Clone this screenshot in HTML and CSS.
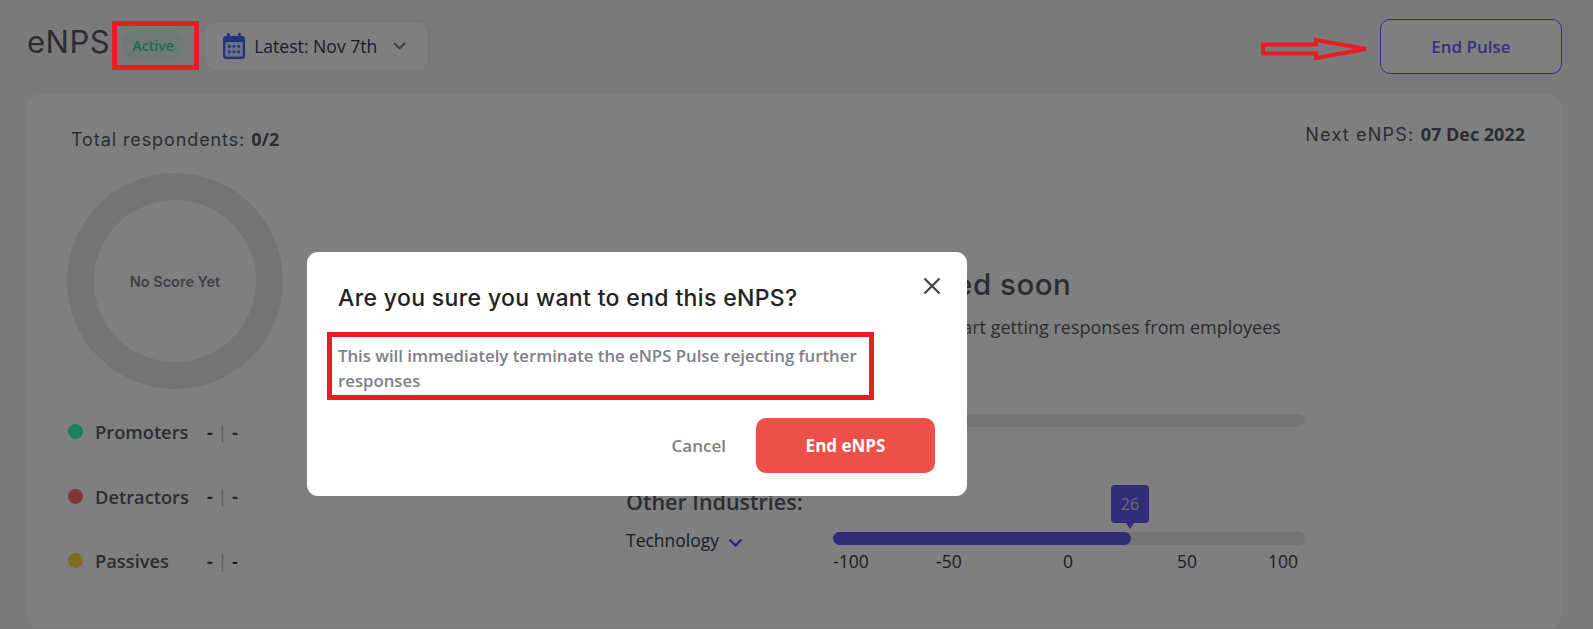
FILE: index.html
```html
<!DOCTYPE html>
<html lang="en">
<head>
    <meta charset="UTF-8">
    <meta name="viewport" content="width=device-width, initial-scale=1.0">
    <title>eNPS</title>
    <link rel="stylesheet" href="styles.css">
</head>
<body>
    <div class="page">
        <header class="top-bar">
            <h1 class="page-title">eNPS</h1>
            <span class="badge">Active</span>
            <div class="date-picker">
                <svg class="calendar" width="24" height="28" viewBox="0 0 24 28">
                    <rect x="1" y="4" width="22" height="23" rx="3" fill="#3e66ff"/>
                    <rect x="5" y="1" width="3" height="6" rx="1.2" fill="#3e66ff"/>
                    <rect x="16" y="1" width="3" height="6" rx="1.2" fill="#3e66ff"/>
                    <rect x="3.2" y="10" width="17.6" height="14.8" rx="1" fill="#d6e0ff"/>
                    <g fill="#3e66ff">
                        <rect x="6" y="13" width="2.6" height="2.6"/>
                        <rect x="10.7" y="13" width="2.6" height="2.6"/>
                        <rect x="15.4" y="13" width="2.6" height="2.6"/>
                        <rect x="6" y="18.5" width="2.6" height="2.6"/>
                        <rect x="10.7" y="18.5" width="2.6" height="2.6"/>
                        <rect x="15.4" y="18.5" width="2.6" height="2.6"/>
                    </g>
                </svg>
                <span class="date-text">Latest: Nov 7th</span>
                <svg class="chevron" width="13" height="8" viewBox="0 0 13 8">
                    <path d="M1 1l5.5 5.5L12 1" fill="none" stroke="#777" stroke-width="1.8"/>
                </svg>
            </div>
            <button class="end-pulse">End Pulse</button>
        </header>

        <main class="card">
            <div class="card-top">
                <p class="total">Total respondents: <b>0/2</b></p>
                <p class="next">Next eNPS: <b>07 Dec 2022</b></p>
            </div>
            <div class="card-body">
                <section class="score">
                    <div class="donut"><span>No Score Yet</span></div>
                    <ul class="legend">
                        <li><i class="dot green"></i><span class="legend-name">Promoters</span><span class="legend-val">- <em>|</em> -</span></li>
                        <li><i class="dot red"></i><span class="legend-name">Detractors</span><span class="legend-val">- <em>|</em> -</span></li>
                        <li><i class="dot yellow"></i><span class="legend-name">Passives</span><span class="legend-val">- <em>|</em> -</span></li>
                    </ul>
                </section>
                <section class="results">
                    <h2>Results will be generated soon</h2>
                    <p class="results-sub">Your scores will appear here once you start getting responses from employees</p>
                    <div class="bar-row first-row">
                        <span class="bar-label">All</span>
                        <div class="track"></div>
                    </div>
                    <h3>Other Industries:</h3>
                    <div class="bar-row tech-row">
                        <span class="bar-label">Technology
                            <svg width="15" height="9" viewBox="0 0 15 9"><path d="M1.5 1.5l6 6 6-6" fill="none" stroke="#5a50e0" stroke-width="2.4"/></svg>
                        </span>
                        <div class="scale">
                            <div class="track">
                                <div class="fill"></div>
                                <div class="tip">26</div>
                            </div>
                            <div class="ticks">
                                <span>-100</span><span>-50</span><span>0</span><span>50</span><span>100</span>
                            </div>
                        </div>
                    </div>
                </section>
            </div>
        </main>
    </div>

    <div class="overlay"></div>

    <div class="modal">
        <button class="close">
            <svg width="18" height="18" viewBox="0 0 18 18"><path d="M1.5 1.5l15 15M16.5 1.5l-15 15" stroke="#444" stroke-width="2.2"/></svg>
        </button>
        <h2 class="modal-title">Are you sure you want to end this eNPS?</h2>
        <p class="modal-text">This will immediately terminate the eNPS Pulse rejecting further responses</p>
        <div class="modal-actions">
            <button class="cancel">Cancel</button>
            <button class="confirm">End eNPS</button>
        </div>
    </div>

    <!-- red annotations on top of the screenshot -->
    <div class="mark-active"></div>
    <svg class="mark-arrow" width="112" height="25" viewBox="0 0 112 25">
        <path d="M3 7.5H56V3L106 12 56 21V16.5H3Z" fill="none" stroke="#ed1c24" stroke-width="4"/>
    </svg>
</body>
</html>
```

FILE: styles.css
```css
* {
    box-sizing: border-box;
}

html, body {
    height: 100%;
}

body {
    margin: 0;
    background-color: #f5f5f5;
    color: #565a64;
    font-family: "Open Sans", sans-serif;
    overflow: hidden;
}

button {
    font-family: inherit;
    background: none;
    border: none;
    padding: 0;
}

.page {
    padding: 0 31px 0 27px;
}

/* header */
.top-bar {
    display: flex;
    align-items: flex-start;
    height: 94px;
}

.page-title {
    margin: 21px 0 0;
    font-family: Inter, sans-serif;
    font-size: 31px;
    line-height: 42px;
    font-weight: 400;
    letter-spacing: 0.5px;
}

.badge {
    margin: 30px 0 0 12px;
    width: 62px;
    height: 30px;
    line-height: 32px;
    text-align: center;
    border-radius: 15px;
    background-color: #def5ec;
    color: #30d8ac;
    font-size: 14px;
    font-weight: 600;
}

.date-picker {
    display: flex;
    align-items: center;
    margin: 21px 0 0 20px;
    width: 225px;
    height: 50px;
    padding-left: 17px;
    border: 1px solid #e8e8e8;
    border-radius: 11px;
    background-color: #fff;
}

.date-text {
    margin-left: 8px;
    font-size: 17.6px;
    color: #343a50;
}

.chevron {
    margin-left: 16px;
}

.end-pulse {
    margin: 19px 0 0 auto;
    width: 182px;
    height: 55px;
    border: 1px solid #6a60ff;
    border-radius: 10px;
    background-color: #fff;
    color: #6a60ff;
    font-size: 17px;
    font-weight: 600;
}

/* main card */
.card {
    height: 534px;
    padding: 0 37px 0 44px;
    border-radius: 14px;
    background-color: #fff;
}

.card-top {
    display: flex;
    justify-content: space-between;
    align-items: flex-start;
}

.total {
    margin: 33px 0 0;
    font-family: Inter, sans-serif;
    font-size: 18px;
    line-height: 24px;
    letter-spacing: 0.9px;
}

.next {
    margin: 28px 0 0;
    font-family: Inter, sans-serif;
    font-size: 18px;
    line-height: 24px;
    letter-spacing: 1.2px;
}

.total b,
.next b {
    font-family: "Open Sans", sans-serif;
    letter-spacing: 0;
    font-size: 18px;
    font-weight: 700;
}

.card-body {
    display: flex;
}

.score {
    width: 555px;
}

.donut {
    display: flex;
    align-items: center;
    justify-content: center;
    margin: 21px 0 0 -4px;
    width: 216px;
    height: 216px;
    border: 27px solid #e6e8ea;
    border-radius: 50%;
    font-family: Inter, sans-serif;
    font-size: 14.5px;
    font-weight: 600;
    color: #7c8090;
}

.legend {
    margin: 30px 0 0 -3px;
    padding: 0;
    list-style: none;
}

.legend li {
    display: flex;
    align-items: center;
    height: 25px;
    margin-bottom: 39.5px;
}

.dot {
    width: 15px;
    height: 15px;
    border-radius: 50%;
    margin-right: 12px;
}

.green { background-color: #36ffc4; }
.red { background-color: #ff6c6c; }
.yellow { background-color: #ffd838; }

.legend-name {
    width: 112px;
    font-size: 18.3px;
    font-weight: 600;
}

.legend-val {
    font-size: 18px;
    font-weight: 700;
    color: #444;
}

.legend-val em {
    font-style: normal;
    font-weight: 400;
    color: #bbb;
}

.results {
    flex: 1;
    padding-top: 112px;
}

.results h2 {
    margin: 0;
    font-family: Inter, sans-serif;
    font-size: 29.5px;
    line-height: 40px;
    font-weight: 500;
    letter-spacing: 0.5px;
}

.results-sub {
    margin: 11px 0 0 -2px;
    font-size: 18px;
    line-height: 24px;
}

.bar-row {
    display: flex;
    align-items: flex-start;
}

.first-row {
    margin-top: 75px;
}

.tech-row {
    margin-top: 12px;
}

.bar-label {
    width: 207px;
    font-size: 17.5px;
    line-height: 24px;
    color: #343a50;
}

.bar-label svg {
    margin-left: 4px;
}

.results h3 {
    margin: 50px 0 0;
    font-size: 21.5px;
    line-height: 28px;
    font-weight: 600;
}

.track {
    position: relative;
    width: 472px;
    height: 13px;
    border-radius: 7px;
    background-color: #e8e8ea;
}

.fill {
    width: 298px;
    height: 13px;
    border-radius: 7px;
    background-color: #6058f0;
}

.tip {
    position: absolute;
    left: 278px;
    top: -47px;
    width: 38px;
    height: 38px;
    line-height: 38px;
    text-align: center;
    border-radius: 4px;
    background-color: #6058f0;
    color: #ddd;
    font-size: 16px;
}

.tip::after {
    content: "";
    position: absolute;
    left: 15px;
    top: 38px;
    border: 4px solid transparent;
    border-top: 6px solid #6058f0;
}

.ticks {
    display: grid;
    grid-template-columns: 103px 127px 114px 91px 30px;
    margin-top: 4px;
    font-size: 17.5px;
    line-height: 24px;
    color: #343a50;
}

.scale {
    margin-top: 4px;
}

/* dim layer + dialog */
.overlay {
    position: fixed;
    inset: 0;
    background-color: rgba(0, 0, 0, 0.5);
}

.modal {
    position: fixed;
    left: 307px;
    top: 252px;
    width: 660px;
    height: 244px;
    padding: 29px 32px 0 31px;
    border-radius: 11px;
    background-color: #fff;
}

.close {
    position: absolute;
    right: 26px;
    top: 25px;
    width: 18px;
    height: 18px;
    line-height: 0;
}

.modal-title {
    margin: 0;
    font-family: Inter, sans-serif;
    font-size: 23px;
    line-height: 34px;
    font-weight: 500;
    letter-spacing: 0.35px;
    color: #222;
}

.modal-text {
    margin: 17px 0 0 -11px;
    width: 547px;
    height: 68px;
    padding: 6px 6px 0 6px;
    border: 5px solid #ed1c24;
    font-size: 16.75px;
    line-height: 25px;
    font-weight: 600;
    color: #7d8088;
}

.modal-actions {
    display: flex;
    justify-content: flex-end;
    align-items: center;
    margin-top: 18px;
}

.cancel {
    font-size: 17px;
    font-weight: 600;
    color: #808080;
}

.confirm {
    margin-left: 30px;
    width: 179px;
    height: 55px;
    border-radius: 10px;
    background-color: #eb5049;
    color: #fff;
    font-size: 17px;
    font-weight: 700;
}

.mark-active {
    position: fixed;
    left: 112px;
    top: 21px;
    width: 87px;
    height: 49px;
    border: 5px solid #ed1c24;
}

.mark-arrow {
    position: fixed;
    left: 1260px;
    top: 37px;
}
```
